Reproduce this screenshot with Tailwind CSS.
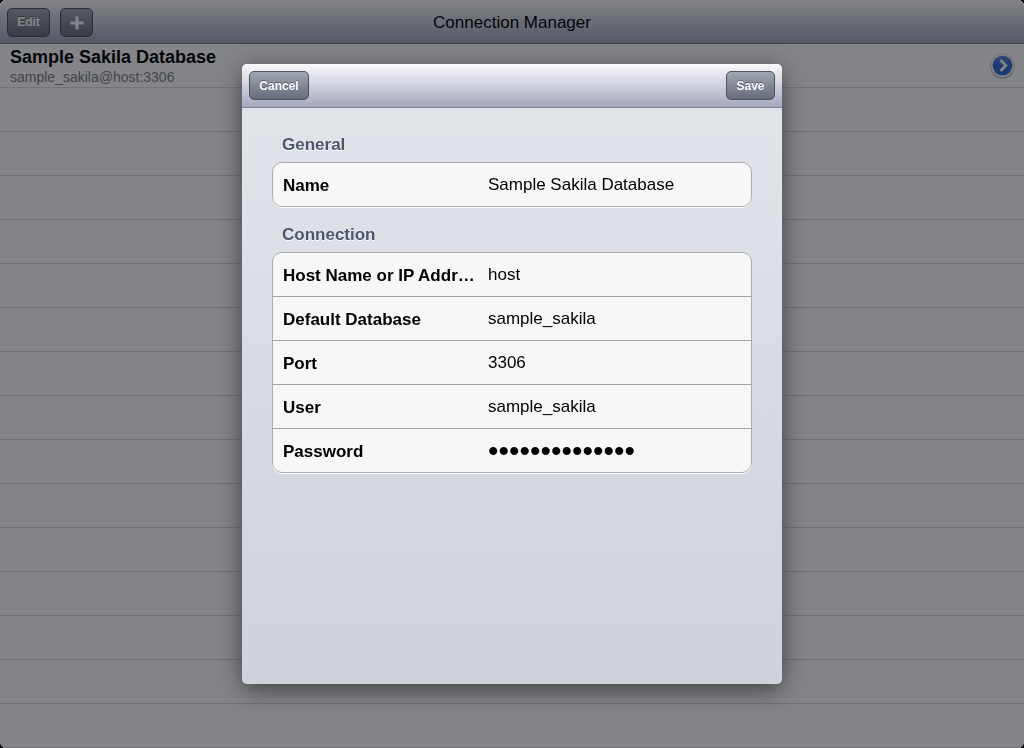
<!DOCTYPE html>
<html lang="en">
<head>
    <meta charset="UTF-8">
    <meta name="viewport" content="width=device-width, initial-scale=1.0">
    <title>Connection Manager</title>
    <script src="https://cdn.jsdelivr.net/npm/@tailwindcss/browser@4"></script>
</head>
<body class="bg-black text-black font-['Liberation_Sans',Arial,sans-serif]">
    <div class="flex h-screen flex-col overflow-hidden rounded-md bg-white">
        <header class="grid h-11 shrink-0 grid-cols-[1fr_auto_1fr] items-center border-b border-[#70758f] bg-linear-to-b from-[#fafbfc] to-[#a2a6b8] px-[7px] pt-px">
            <div class="flex gap-[10px]">
                <button type="button" class="h-[29px] w-[43px] rounded-[5px] border border-[#4c525c] bg-linear-to-b from-[#a2a8b0] to-[#666d79] text-xs font-bold text-white text-shadow-[0_-1px_0_#00000060]">Edit</button>
                <button type="button" aria-label="Add connection" class="flex h-[29px] w-[33px] items-center justify-center rounded-[5px] border border-[#4c525c] bg-linear-to-b from-[#a2a8b0] to-[#666d79] pt-px">
                    <svg class="size-[14px]" viewBox="0 0 14 14" fill="#fff"><path d="M5.5 0.5h3v5h5v3h-5v5h-3v-5h-5v-3h5z"/></svg>
                </button>
            </div>
            <h1 class="pt-px text-[17px]">Connection Manager</h1>
        </header>

        <main class="grow overflow-hidden">
            <ul>
                <li class="flex h-11 items-center justify-between border-b border-[#dadada] pr-2 pl-[10px]">
                    <div class="pt-0.5">
                        <h2 class="text-[18px] leading-[21px] font-bold">Sample Sakila Database</h2>
                        <p class="text-[14px] leading-[18px] text-[#808080]">sample_sakila@host:3306</p>
                    </div>
                    <button type="button" aria-label="Connection details">
                        <svg class="size-[27px]" viewBox="0 0 27 27">
                            <defs>
                                <linearGradient id="disclosure" x1="0" y1="0" x2="0" y2="1">
                                    <stop offset="0" stop-color="#5585d2"/>
                                    <stop offset="0.5" stop-color="#2f69cc"/>
                                    <stop offset="1" stop-color="#2468dc"/>
                                </linearGradient>
                            </defs>
                            <circle cx="13.5" cy="14.5" r="12.2" fill="#000" opacity=".3"/>
                            <circle cx="13.5" cy="13.5" r="12" fill="#f4f4f4" stroke="#c8c8c8" stroke-width=".6"/>
                            <circle cx="13.5" cy="13.5" r="9.8" fill="url(#disclosure)"/>
                            <path d="M11.5 8l5.3 5.5-5.3 5.5" fill="none" stroke="#fff" stroke-width="2.8"/>
                        </svg>
                    </button>
                </li>
                <li class="h-11 border-b border-[#dadada]"></li>
                <li class="h-11 border-b border-[#dadada]"></li>
                <li class="h-11 border-b border-[#dadada]"></li>
                <li class="h-11 border-b border-[#dadada]"></li>
                <li class="h-11 border-b border-[#dadada]"></li>
                <li class="h-11 border-b border-[#dadada]"></li>
                <li class="h-11 border-b border-[#dadada]"></li>
                <li class="h-11 border-b border-[#dadada]"></li>
                <li class="h-11 border-b border-[#dadada]"></li>
                <li class="h-11 border-b border-[#dadada]"></li>
                <li class="h-11 border-b border-[#dadada]"></li>
                <li class="h-11 border-b border-[#dadada]"></li>
                <li class="h-11 border-b border-[#dadada]"></li>
                <li class="h-11 border-b border-[#dadada]"></li>
                <li class="h-11 border-b border-[#dadada]"></li>
            </ul>
        </main>
    </div>

    <!-- Form sheet -->
    <div class="fixed inset-0 flex items-center justify-center rounded-md bg-[#0a0b12]/50">
        <form role="dialog" aria-label="Edit connection" class="flex h-[620px] max-h-full w-full max-w-[540px] flex-col overflow-hidden rounded-[5px] bg-linear-to-b from-[#e2e5ea] to-[#d0d2db] shadow-[0_6px_24px_#00000080]">
            <div class="flex h-11 shrink-0 items-center justify-between border-b border-[#7d829b] bg-linear-to-b from-[#fafafb] to-[#a5a8bd] px-[7px]">
                <button type="button" class="h-[29px] w-[60px] rounded-[5px] border border-[#4c525c] bg-linear-to-b from-[#a2a8b0] to-[#666d79] text-xs font-bold text-white text-shadow-[0_-1px_0_#00000060]">Cancel</button>
                <button type="submit" class="h-[29px] w-[49px] rounded-[5px] border border-[#4c525c] bg-linear-to-b from-[#a2a8b0] to-[#666d79] text-xs font-bold text-white text-shadow-[0_-1px_0_#00000060]">Save</button>
            </div>

            <div class="px-[30px] pt-[27px]">
                <h2 class="px-[10px] text-[17px] leading-5 font-bold text-[#4c566c] text-shadow-[0_1px_0_#ffffff]">General</h2>
                <div class="mt-[7px] rounded-[10px] border border-[#abadb3] bg-[#f7f7f7] shadow-[0_1px_0_#ffffff]">
                    <div class="flex h-[43px] items-center px-[10px]">
                        <label for="name" class="w-[205px] shrink-0 truncate pt-0.5 pr-2 text-[17px] font-bold">Name</label>
                        <input id="name" type="text" value="Sample Sakila Database" class="min-w-0 grow text-[17px] outline-none">
                    </div>
                </div>

                <h2 class="mt-[18px] px-[10px] text-[17px] leading-5 font-bold text-[#4c566c] text-shadow-[0_1px_0_#ffffff]">Connection</h2>
                <div class="mt-[7px] divide-y divide-[#a0a2a6] rounded-[10px] border border-[#abadb3] bg-[#f7f7f7] shadow-[0_1px_0_#ffffff]">
                    <div class="flex h-11 items-center px-[10px]">
                        <label for="host" class="w-[205px] shrink-0 truncate pt-0.5 pr-2 text-[17px] font-bold">Host Name or IP Address</label>
                        <input id="host" type="text" value="host" class="min-w-0 grow text-[17px] outline-none">
                    </div>
                    <div class="flex h-11 items-center px-[10px]">
                        <label for="database" class="w-[205px] shrink-0 truncate pt-0.5 pr-2 text-[17px] font-bold">Default Database</label>
                        <input id="database" type="text" value="sample_sakila" class="min-w-0 grow text-[17px] outline-none">
                    </div>
                    <div class="flex h-11 items-center px-[10px]">
                        <label for="port" class="w-[205px] shrink-0 truncate pt-0.5 pr-2 text-[17px] font-bold">Port</label>
                        <input id="port" type="text" inputmode="numeric" value="3306" class="min-w-0 grow text-[17px] outline-none">
                    </div>
                    <div class="flex h-11 items-center px-[10px]">
                        <label for="user" class="w-[205px] shrink-0 truncate pt-0.5 pr-2 text-[17px] font-bold">User</label>
                        <input id="user" type="text" value="sample_sakila" class="min-w-0 grow text-[17px] outline-none">
                    </div>
                    <div class="flex h-[43px] items-center px-[10px]">
                        <label for="password" class="w-[205px] shrink-0 truncate pt-0.5 pr-2 text-[17px] font-bold">Password</label>
                        <input id="password" type="password" value="samplepassword" class="h-8 min-w-0 grow text-[30px] outline-none">
                    </div>
                </div>
            </div>
        </form>
    </div>
</body>
</html>
